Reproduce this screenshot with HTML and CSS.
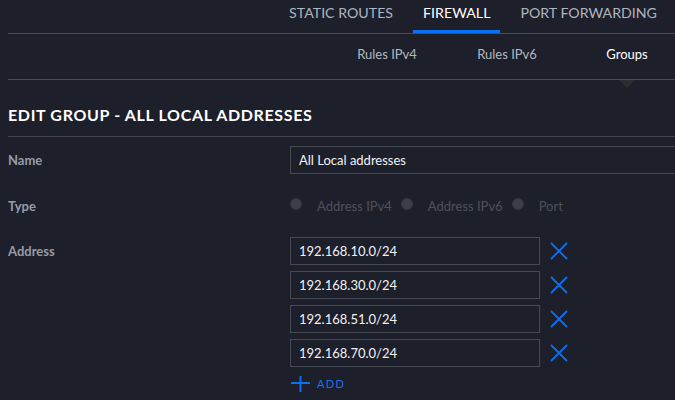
FILE: index.html
```html
<!DOCTYPE html>
<html>
<head>
<meta charset="utf-8">
<link rel="stylesheet" href="styles.css">
</head>
<body>
  <nav class="tabs">
    <a class="tab">STATIC ROUTES</a>
    <a class="tab active">FIREWALL</a>
    <a class="tab">PORT FORWARDING</a>
  </nav>
  <div class="subnav">
    <div class="subtabs">
      <a class="subtab">Rules IPv4</a>
      <a class="subtab">Rules IPv6</a>
      <a class="subtab active">Groups</a>
    </div>
  </div>
  <h1 class="heading">EDIT GROUP - ALL LOCAL ADDRESSES</h1>
  <form class="form">
    <div class="row row-name">
      <label class="label">Name</label>
      <input class="input input-wide" type="text" value="All Local addresses">
    </div>
    <div class="row row-type">
      <span class="label">Type</span>
      <div class="radios">
        <span class="radio"></span><span class="radio-text">Address IPv4</span>
        <span class="radio"></span><span class="radio-text">Address IPv6</span>
        <span class="radio"></span><span class="radio-text">Port</span>
      </div>
    </div>
    <div class="row row-address">
      <span class="label label-top">Address</span>
      <div class="addresses">
        <div class="entry">
          <input class="input input-addr" type="text" value="192.168.10.0/24">
          <svg class="remove" width="18" height="18" viewBox="0 0 18 18"><path d="M1 1L17 17M17 1L1 17"/></svg>
        </div>
        <div class="entry">
          <input class="input input-addr" type="text" value="192.168.30.0/24">
          <svg class="remove" width="18" height="18" viewBox="0 0 18 18"><path d="M1 1L17 17M17 1L1 17"/></svg>
        </div>
        <div class="entry">
          <input class="input input-addr" type="text" value="192.168.51.0/24">
          <svg class="remove" width="18" height="18" viewBox="0 0 18 18"><path d="M1 1L17 17M17 1L1 17"/></svg>
        </div>
        <div class="entry">
          <input class="input input-addr" type="text" value="192.168.70.0/24">
          <svg class="remove" width="18" height="18" viewBox="0 0 18 18"><path d="M1 1L17 17M17 1L1 17"/></svg>
        </div>
        <div class="add">
          <svg class="plus" width="19" height="16" viewBox="0 0 19 16"><path d="M9.5 0V16M0 7H19"/></svg>
          <span class="add-text">ADD</span>
        </div>
      </div>
    </div>
  </form>
</body>
</html>
```
FILE: styles.css
```css
html, body {
  overflow: hidden;
}
body {
  margin: 0;
  padding: 0 0 0 8px;
  height: 400px;
  background: #1d1f2b;
  font-family: Lato, "Open Sans", sans-serif;
  color: #fff;
}
.tabs {
  display: flex;
  justify-content: flex-end;
  padding-right: 8px;
  border-bottom: 1px solid #4a4c55;
}
.tab {
  padding: 4px 10px 8px;
  margin-left: 10px;
  font-size: 14.2px;
  line-height: 18px;
  color: #aeb6bf;
  border-bottom: 3px solid transparent;
}
.tab.active {
  color: #fff;
  border-bottom-color: #0a72f5;
}
.subnav {
  border-bottom: 1px solid #4a4c55;
}
.subtabs {
  display: flex;
  justify-content: flex-end;
  margin-right: -12px;
}
.subtab {
  position: relative;
  width: 120px;
  text-align: center;
  padding: 12px 0 17px;
  font-size: 13px;
  line-height: 16px;
  color: #b3b9c0;
}
.subtab.active {
  color: #fff;
}
.subtab.active::after {
  content: "";
  position: absolute;
  left: 52px;
  top: calc(100% + 1px);
  width: 16px;
  height: 8px;
  background: #2a2e33;
  clip-path: polygon(0 0, 100% 0, 50% 100%);
}
.heading {
  margin: 26px 0 0;
  padding-bottom: 12px;
  font-size: 16px;
  line-height: 18px;
  font-weight: 700;
  letter-spacing: 0.65px;
  color: #fff;
  border-bottom: 1px solid #3f444b;
}
.form {
  padding-top: 9px;
}
.row {
  display: flex;
  align-items: center;
}
.label {
  flex: 0 0 282px;
  font-size: 13px;
  line-height: 16px;
  font-weight: 700;
  color: #959ca6;
}
.row-name {
  height: 28px;
}
.row-type {
  margin-top: 18px;
  height: 28px;
}
.row-address {
  margin-top: 17px;
  align-items: flex-start;
}
.label-top {
  padding-top: 6px;
}
.input {
  box-sizing: border-box;
  height: 28px;
  margin: 0;
  padding: 0 8px;
  border: 1px solid #454a52;
  border-radius: 0;
  background: transparent;
  font-family: Lato, "Open Sans", sans-serif;
  font-size: 13px;
  color: #f2f2f2;
  outline: none;
}
.input-wide {
  flex: 0 0 420px;
  width: 420px;
}
.radios {
  display: flex;
  align-items: center;
}
.radio {
  box-sizing: border-box;
  width: 12px;
  height: 12px;
  border-radius: 50%;
  background: #3c3f49;
  border: 1px solid #34363f;
  margin-bottom: 4px;
  margin-right: 15px;
}
.radio-text {
  font-size: 13px;
  line-height: 16px;
  color: #4d515c;
  margin-right: 9px;
}
.addresses {
  display: flex;
  flex-direction: column;
  gap: 6px;
}
.entry {
  display: flex;
  align-items: center;
}
.input-addr {
  width: 250px;
}
.remove {
  margin-left: 10px;
  fill: none;
  stroke: #0d6ff2;
  stroke-width: 1.8;
}
.add {
  display: flex;
  align-items: center;
  margin-top: 3px;
  height: 16px;
}
.plus {
  margin-left: 1px;
  fill: none;
  stroke: #0d6ff2;
  stroke-width: 2;
}
.add-text {
  margin-left: 7px;
  font-size: 11px;
  line-height: 16px;
  letter-spacing: 1.3px;
  color: #1773f0;
}
```
